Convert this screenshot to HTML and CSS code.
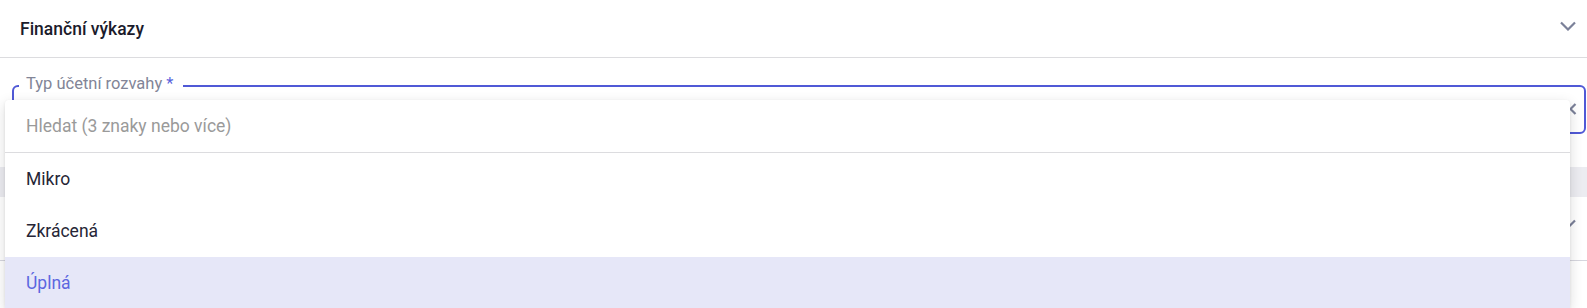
FILE: index.html
```html
<!DOCTYPE html>
<html lang="cs">
<head>
<meta charset="utf-8">
<title>Finanční výkazy</title>
<link rel="stylesheet" href="styles.css">
</head>
<body>
  <div class="section-header">
    <span class="section-title">Finanční výkazy</span>
    <svg class="chevron" width="16" height="10" viewBox="0 0 16 10"><polyline points="1,1.5 8,8.5 15,1.5" fill="none" stroke="#7b8199" stroke-width="2.2"/></svg>
  </div>

  <div class="form">
    <fieldset class="field">
      <legend class="field-label">Typ účetní rozvahy <span class="req">*</span></legend>
      <div class="field-body">
        <svg class="field-chevron" width="8" height="12" viewBox="0 0 8 12"><polyline points="6.5,1 1.5,6 6.5,11" fill="none" stroke="#7b8199" stroke-width="2.2"/></svg>
      </div>
    </fieldset>

    <div class="band"></div>
    <div class="row">
      <svg class="chevron" width="16" height="10" viewBox="0 0 16 10"><polyline points="1,1.5 8,8.5 15,1.5" fill="none" stroke="#7b8199" stroke-width="2.2"/></svg>
    </div>

    <div class="dropdown">
      <div class="search"><input class="search-input" type="text" placeholder="Hledat (3 znaky nebo více)"></div>
      <div class="option">Mikro</div>
      <div class="option">Zkrácená</div>
      <div class="option option-active">Úplná</div>
    </div>
  </div>
</body>
</html>
```
FILE: styles.css
```css
html, body {
  margin: 0;
  padding: 0;
  background: #ffffff;
  font-family: Roboto, "Liberation Sans", sans-serif;
}

body {
  min-height: 308px;
}

.section-header {
  height: 57px;
  display: flex;
  align-items: center;
  justify-content: space-between;
  padding: 0 11px 0 20px;
  border-bottom: 1px solid #dcdcdf;
}

.section-title {
  font-size: 17.5px;
  font-weight: 500;
  color: #1b1b2b;
  margin-top: 1px;
}

.chevron {
  display: block;
  margin-bottom: 6px;
}

.form {
  position: relative;
  padding: 16px 1px 0 12px;
}

.field {
  margin: 0;
  padding: 0;
  min-width: 0;
  border: 2px solid #5059d6;
  border-radius: 6px;
}

.field-label {
  margin-left: 5px;
  padding: 0 10px 4px 7px;
  font-size: 16.5px;
  line-height: 19px;
  color: #828597;
}

.req {
  color: #5a63dc;
}

.field-body {
  height: 35px;
  display: flex;
  justify-content: flex-end;
  align-items: flex-start;
  padding-right: 7px;
}

.field-chevron {
  display: block;
  margin-top: 6px;
}

.band {
  margin-top: 33px;
  margin-left: -12px;
  margin-right: -1px;
  height: 30px;
  background: #ececf1;
}

.row {
  margin-left: -12px;
  margin-right: -1px;
  height: 63px;
  display: flex;
  align-items: center;
  justify-content: flex-end;
  padding-right: 11px;
  border-bottom: 1px solid #d6d6de;
}

.row .chevron {
  margin-bottom: 10px;
}

.dropdown {
  position: absolute;
  top: 42px;
  left: 5px;
  right: 17px;
  background: #ffffff;
  border-radius: 4px;
  box-shadow: 0 4px 14px rgba(0, 0, 0, 0.14), 0 1px 3px rgba(0, 0, 0, 0.08);
}

.search {
  height: 52px;
  border-bottom: 1px solid #dcdcdf;
  display: flex;
  align-items: center;
  padding-left: 21px;
}

.search-input {
  border: none;
  outline: none;
  padding: 0;
  margin: 0;
  width: 100%;
  background: transparent;
  font-family: inherit;
  font-size: 17.5px;
  color: #262636;
}

.search-input::placeholder {
  color: #9a9a9a;
}

.option {
  height: 52px;
  display: flex;
  align-items: center;
  padding-left: 21px;
  font-size: 17.5px;
  color: #262636;
}

.option-active {
  background: #e6e7f8;
  color: #5c66e0;
}
```
